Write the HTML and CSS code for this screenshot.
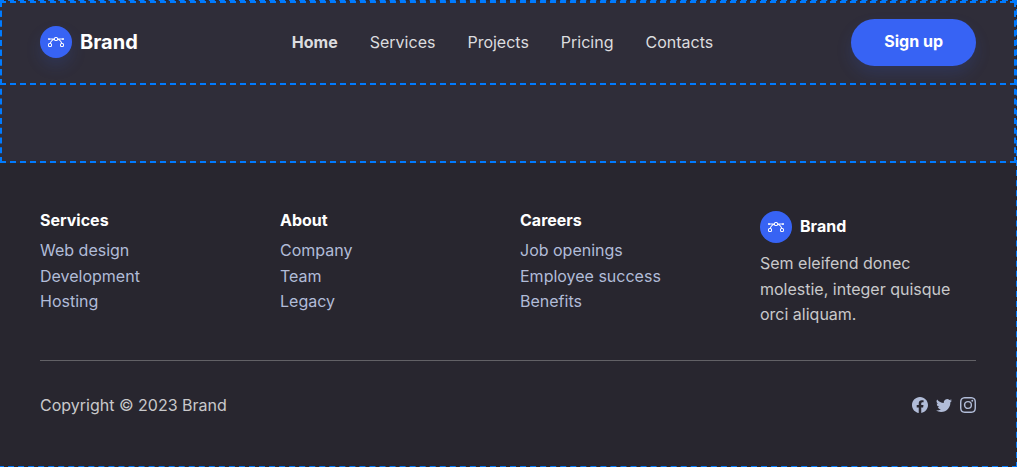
FILE: index.html
```html
<!DOCTYPE html>
<html lang="en">
<head>
<meta charset="utf-8">
<meta name="viewport" content="width=device-width, initial-scale=1">
<title>Brand</title>
<link rel="stylesheet" href="styles.css">
</head>
<body>
<svg class="sprite" aria-hidden="true">
  <symbol id="bezier" viewBox="0 0 16 16"><path fill-rule="evenodd" d="M0 10.5A1.5 1.5 0 0 1 1.5 9h1A1.5 1.5 0 0 1 4 10.5v1A1.5 1.5 0 0 1 2.5 13h-1A1.5 1.5 0 0 1 0 11.5v-1zm1.5-.5a.5.5 0 0 0-.5.5v1a.5.5 0 0 0 .5.5h1a.5.5 0 0 0 .5-.5v-1a.5.5 0 0 0-.5-.5h-1zm10.500 .5A1.500 1.500 0 0 1 13.500 9h1a1.500 1.500 0 0 1 1.500 1.500v1a1.500 1.500 0 0 1-1.500 1.500h-1a1.500 1.500 0 0 1-1.500-1.500v-1zm1.500-.5a.5.5 0 0 0-.5.5v1a.5.5 0 0 0 .5.5h1a.5.5 0 0 0 .5-.5v-1a.5.5 0 0 0-.5-.5h-1zM6 4.500A1.500 1.500 0 0 1 7.500 3h1A1.500 1.500 0 0 1 10 4.500v1A1.500 1.500 0 0 1 8.500 7h-1A1.500 1.500 0 0 1 6 5.500v-1zM7.500 4a.5.5 0 0 0-.5.5v1a.5.5 0 0 0 .5.5h1a.5.5 0 0 0 .5-.5v-1a.5.5 0 0 0-.5-.5h-1z"/><path d="M6 4.500H1.866a1 1 0 1 0 0 1h2.668A6.517 6.517 0 0 0 1.814 9H2.500c.123 0 .244.015.358.043a5.517 5.517 0 0 1 3.185-3.185A1.503 1.503 0 0 1 6 5.500v-1zm3.957 1.358A1.500 1.500 0 0 0 10 5.500v-1h4.134a1 1 0 1 1 0 1h-2.668a6.517 6.517 0 0 1 2.720 3.500H13.500c-.123 0-.243.015-.358.043a5.517 5.517 0 0 0-3.185-3.185z"/></symbol>
</svg>
<div class="page">
  <div class="hero">
    <nav class="navbar">
      <div class="container navbar-inner">
        <a class="brand" href="#"><span class="brand-icon brand-icon-shadow"><svg viewBox="0 0 16 16" aria-hidden="true"><use href="#bezier"/></svg></span><span>Brand</span></a>
        <ul class="nav-links">
          <li><a class="active" href="#">Home</a></li>
          <li><a href="#">Services</a></li>
          <li><a href="#">Projects</a></li>
          <li><a href="#">Pricing</a></li>
          <li><a href="#">Contacts</a></li>
        </ul>
        <button class="signup" type="button">Sign up</button>
      </div>
    </nav>
  </div>
  <footer class="footer">
    <div class="container">
      <div class="columns">
        <div>
          <h3>Services</h3>
          <ul><li><a href="#">Web design</a></li><li><a href="#">Development</a></li><li><a href="#">Hosting</a></li></ul>
        </div>
        <div>
          <h3>About</h3>
          <ul><li><a href="#">Company</a></li><li><a href="#">Team</a></li><li><a href="#">Legacy</a></li></ul>
        </div>
        <div>
          <h3>Careers</h3>
          <ul><li><a href="#">Job openings</a></li><li><a href="#">Employee success</a></li><li><a href="#">Benefits</a></li></ul>
        </div>
        <div>
          <div class="footer-brand"><span class="brand-icon"><svg viewBox="0 0 16 16" aria-hidden="true"><use href="#bezier"/></svg></span><span>Brand</span></div>
          <p>Sem eleifend donec molestie, integer quisque orci aliquam.</p>
        </div>
      </div>
      <div class="bottom">
        <p>Copyright © 2023 Brand</p>
        <ul class="social">
          <li><a href="#" aria-label="Facebook"><svg viewBox="0 0 16 16"><path d="M16 8.049c0-4.446-3.582-8.050-8-8.050C3.580 0-.002 3.603-.002 8.050c0 4.017 2.926 7.347 6.750 7.951v-5.625h-2.030V8.050H6.750V6.275c0-2.017 1.195-3.131 3.022-3.131.876 0 1.791.157 1.791.157v1.980h-1.009c-.993 0-1.303.621-1.303 1.258v1.510h2.218l-.354 2.326H9.250V16c3.824-.604 6.750-3.934 6.750-7.951z"/></svg></a></li>
          <li><a href="#" aria-label="Twitter"><svg viewBox="0 0 16 16"><path d="M5.026 15c6.038 0 9.341-5.003 9.341-9.334 0-.140 0-.282-.006-.422A6.685 6.685 0 0 0 16 3.542a6.658 6.658 0 0 1-1.889.518 3.301 3.301 0 0 0 1.447-1.817 6.533 6.533 0 0 1-2.087.793A3.286 3.286 0 0 0 7.875 6.030a9.325 9.325 0 0 1-6.767-3.429 3.289 3.289 0 0 0 1.018 4.382A3.323 3.323 0 0 1 .640 6.575v.045a3.288 3.288 0 0 0 2.632 3.218 3.203 3.203 0 0 1-.865.115 3.230 3.230 0 0 1-.614-.057 3.283 3.283 0 0 0 3.067 2.277A6.588 6.588 0 0 1 .780 13.580a6.320 6.320 0 0 1-.780-.045A9.344 9.344 0 0 0 5.026 15z"/></svg></a></li>
          <li><a href="#" aria-label="Instagram"><svg viewBox="0 0 16 16"><path d="M8 0C5.829 0 5.556.010 4.703.048 3.850.088 3.269.222 2.760.420a3.917 3.917 0 0 0-1.417.923A3.927 3.927 0 0 0 .420 2.760C.222 3.268.087 3.850.048 4.700.010 5.555 0 5.827 0 8.001c0 2.172.010 2.444.048 3.297.040.852.174 1.433.372 1.942.205.526.478.972.923 1.417.444.445.890.719 1.416.923.510.198 1.090.333 1.942.372C5.555 15.990 5.827 16 8 16s2.444-.010 3.298-.048c.851-.040 1.434-.174 1.943-.372a3.916 3.916 0 0 0 1.416-.923c.445-.445.718-.891.923-1.417.197-.509.332-1.090.372-1.942C15.990 10.445 16 10.173 16 8s-.010-2.445-.048-3.299c-.040-.851-.175-1.433-.372-1.941a3.926 3.926 0 0 0-.923-1.417A3.911 3.911 0 0 0 13.240.420c-.510-.198-1.092-.333-1.943-.372C10.443.010 10.172 0 7.998 0h.003zm-.717 1.442h.718c2.136 0 2.389.007 3.232.046.780.035 1.204.166 1.486.275.373.145.640.319.920.599.280.280.453.546.598.920.110.281.240.705.275 1.485.039.843.047 1.096.047 3.231s-.008 2.389-.047 3.232c-.035.780-.166 1.203-.275 1.485a2.470 2.470 0 0 1-.599.919c-.280.280-.546.453-.920.598-.280.110-.704.240-1.485.276-.843.038-1.096.047-3.232.047s-2.390-.009-3.233-.047c-.780-.036-1.203-.166-1.485-.276a2.478 2.478 0 0 1-.920-.598 2.480 2.480 0 0 1-.600-.920c-.109-.281-.240-.705-.275-1.485-.038-.843-.046-1.096-.046-3.233 0-2.136.008-2.388.046-3.231.036-.780.166-1.204.276-1.486.145-.373.319-.640.599-.920.280-.280.546-.453.920-.598.282-.110.705-.240 1.485-.276.738-.034 1.024-.044 2.515-.045v.002zm4.988 1.328a.960.960 0 1 0 0 1.920.960.960 0 0 0 0-1.920zm-4.270 1.122a4.109 4.109 0 1 0 0 8.217 4.109 4.109 0 0 0 0-8.217zm0 1.441a2.667 2.667 0 1 1 0 5.334 2.667 2.667 0 0 1 0-5.334z"/></svg></a></li>
        </ul>
      </div>
    </div>
  </footer>
</div>
</body>
</html>
```
FILE: styles.css
```css
* { box-sizing: border-box; }
html { background: #28262f; overflow-x: hidden; }
body { margin: 0; font: 400 16px/1.6 Inter, "Liberation Sans", sans-serif; color: #c9c9cb; }
ul, p, h3 { margin: 0; padding: 0; list-style: none; }
a { color: inherit; text-decoration: none; }
svg { display: block; width: 16px; height: 16px; fill: currentColor; }
.sprite { display: none; }

.page { min-height: 100vh; margin-left: -1px; padding: 1px 1px 0; outline: 2px dashed #007bff; outline-offset: -1px; }
.hero { min-height: 162px; background: #2f2d39; outline: 2px dashed #007bff; outline-offset: -2px; }
.navbar { padding: 18px 0 19px; outline: 2px dashed #007bff; outline-offset: -2px; }
.container { padding: 0 40px; }
.navbar-inner { display: flex; align-items: center; }

.brand { display: flex; align-items: center; gap: 8px; margin-right: 16px; padding-bottom: 1px; color: #fff; font-size: 20px; font-weight: 700; }
.brand-icon { display: grid; place-items: center; width: 32px; height: 32px; border-radius: 50%; background: #3763f4; color: #fff; }
.brand-icon-shadow { box-shadow: 0 8px 16px rgba(55, 99, 244, .15); }
.nav-links { display: flex; gap: 32px; margin: 0 auto; padding: 0 16px; color: #dcdcdf; }
.nav-links .active { font-weight: 700; }
.signup { height: 47px; padding: 0 33px 1px; border: 0; border-radius: 24px; background: #3763f4; color: #fff; font: inherit; font-weight: 700; box-shadow: 0 8px 16px rgba(55, 99, 244, .15); cursor: pointer; }

.footer { padding: 48px 0; }
.columns { display: grid; grid-template-columns: repeat(4, 1fr); gap: 24px; padding-bottom: 32px; border-bottom: 1px solid #626166; }
.columns h3 { margin-bottom: 8px; color: #fff; font-size: 16px; font-weight: 700; line-height: 19px; }
.columns ul { color: #b1bcd8; }
.footer-brand { display: flex; align-items: center; gap: 8px; margin-bottom: 8px; color: #fff; font-weight: 700; }
.bottom { display: flex; align-items: center; justify-content: space-between; padding-top: 32px; }
.social { display: flex; gap: 8px; padding-bottom: 1px; color: #b1bcd8; }
```
